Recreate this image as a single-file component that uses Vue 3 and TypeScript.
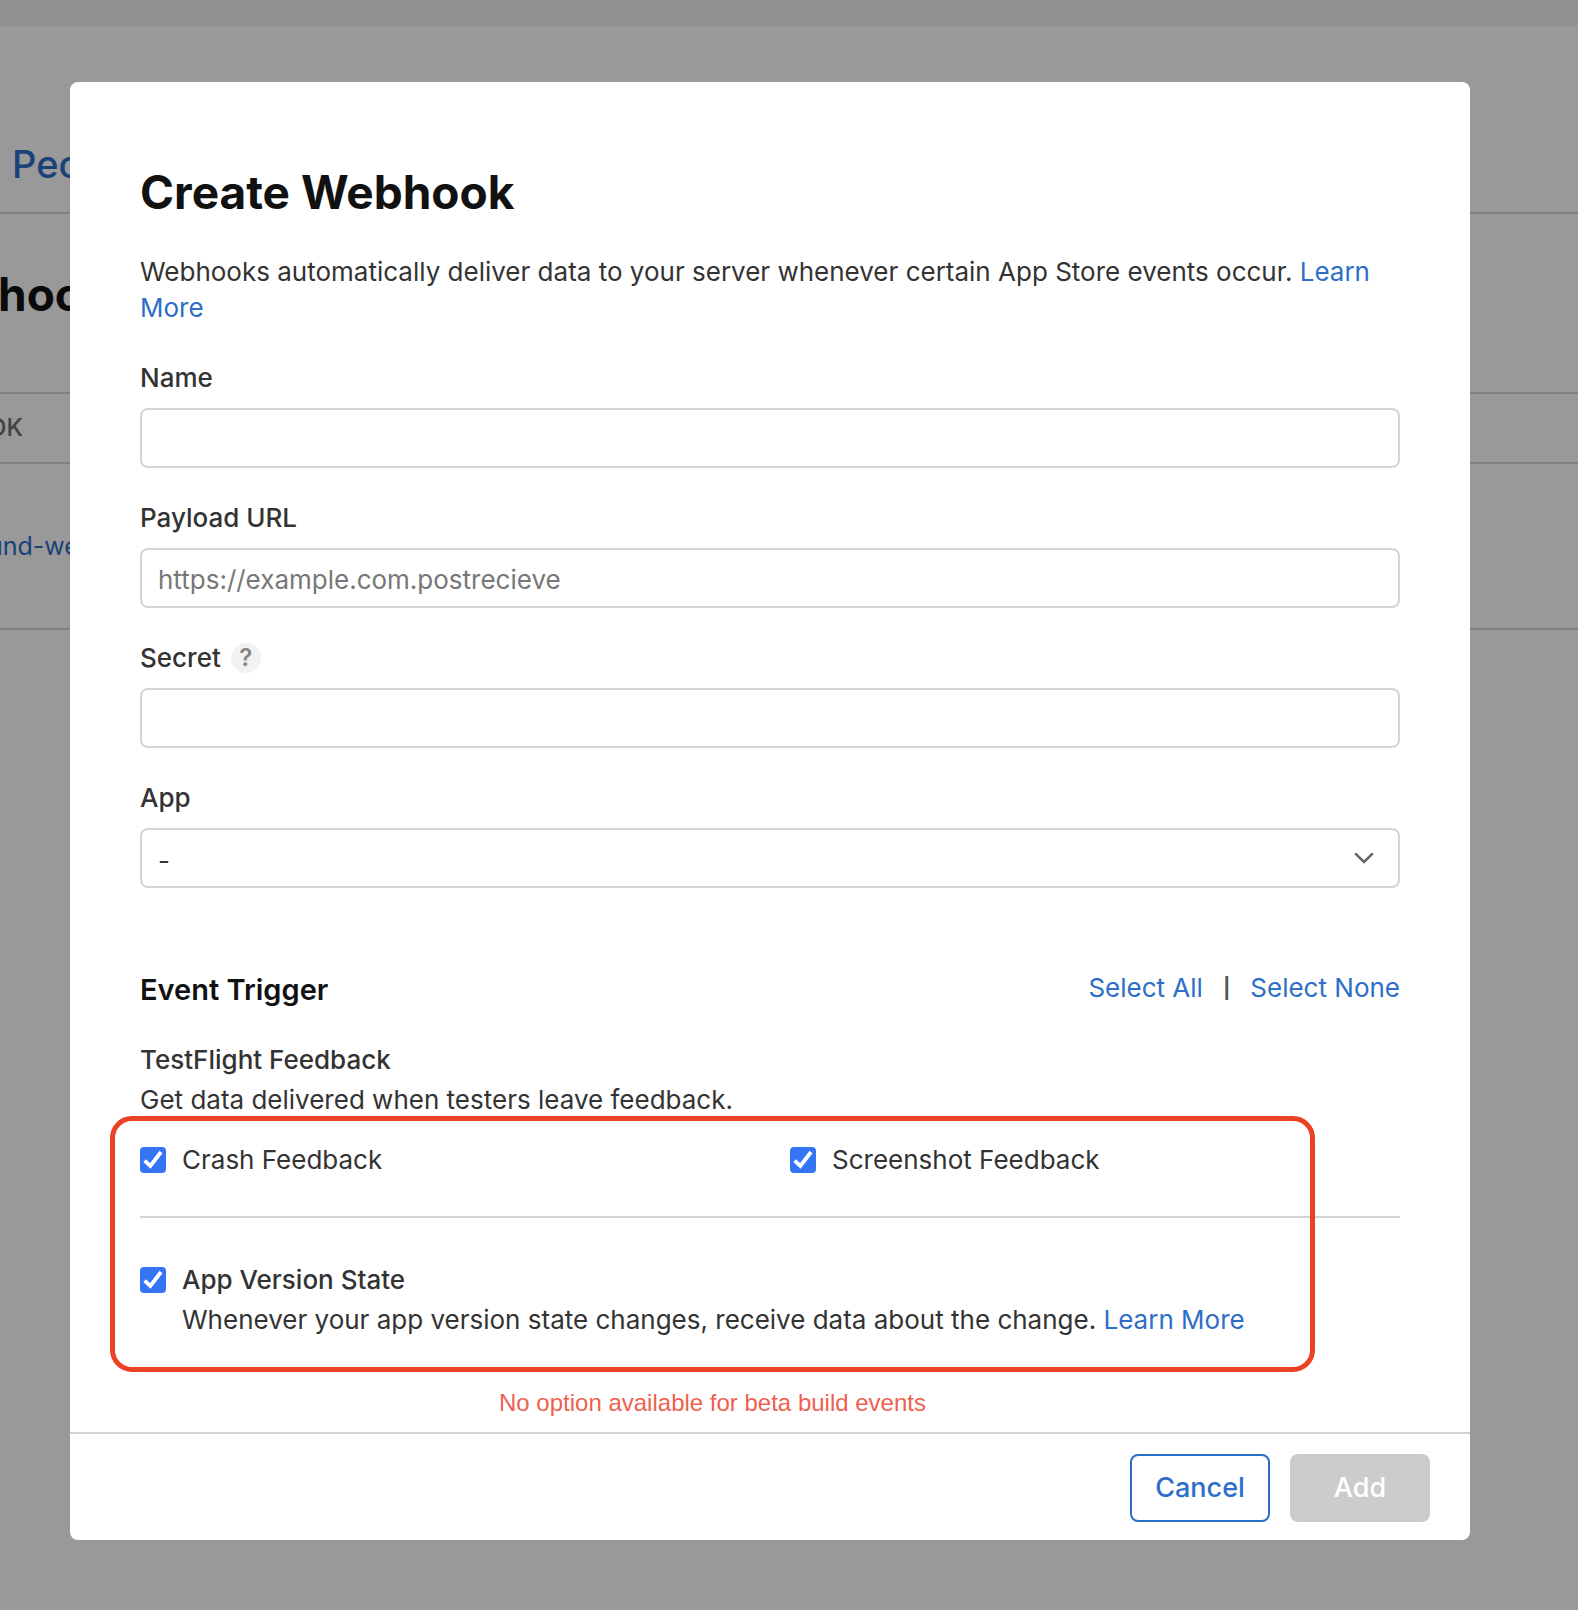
<script setup lang="ts">
import { reactive, ref } from 'vue'

interface EventOption {
  id: string
  label: string
}

const form = reactive({ name: '', payloadUrl: '', secret: '', app: '-' })

const feedbackOptions: EventOption[] = [
  { id: 'crash-feedback', label: 'Crash Feedback' },
  { id: 'screenshot-feedback', label: 'Screenshot Feedback' },
]
const stateOption: EventOption = { id: 'app-version-state', label: 'App Version State' }
const allIds = [...feedbackOptions.map((option) => option.id), stateOption.id]

const selected = ref<string[]>([...allIds])
const selectAll = () => { selected.value = [...allIds] }
const selectNone = () => { selected.value = [] }
</script>

<template>
  <div class="screen">
    <div class="page">
      <div class="page-strip"></div>
      <nav class="page-tabs"><a href="#people">Peo</a></nav>
      <h1 class="page-title">hoo</h1>
      <div class="page-head">OK</div>
      <div class="page-row"><a href="#webhook">und-we</a></div>
    </div>

    <div class="backdrop">
      <form class="modal" role="dialog" aria-labelledby="modal-title" @submit.prevent>
        <div class="body">
          <h2 id="modal-title" class="title">Create Webhook</h2>
          <p class="intro">
            Webhooks automatically deliver data to your server whenever certain App Store events occur.
            <a href="#learn">Learn More</a>
          </p>

          <div class="fields">
            <div class="field">
              <label for="name">Name</label>
              <input id="name" v-model="form.name" class="control" type="text" />
            </div>
            <div class="field">
              <label for="payload">Payload URL</label>
              <input
                id="payload"
                v-model="form.payloadUrl"
                class="control"
                type="text"
                placeholder="https://example.com.postrecieve"
              />
            </div>
            <div class="field">
              <div class="label-row">
                <label for="secret">Secret</label>
                <button type="button" class="help">?</button>
              </div>
              <input id="secret" v-model="form.secret" class="control" type="text" />
            </div>
            <div class="field">
              <label for="app">App</label>
              <div class="select-wrap">
                <select id="app" v-model="form.app" class="control">
                  <option value="-">-</option>
                </select>
                <svg class="chevron" viewBox="0 0 20 12" aria-hidden="true">
                  <path d="M1.2 1.3 L10 10 L18.8 1.3" />
                </svg>
              </div>
            </div>
          </div>

          <div class="section-head">
            <h3>Event Trigger</h3>
            <div class="actions">
              <button type="button" class="link" @click="selectAll">Select All</button>
              <span class="bar">|</span>
              <button type="button" class="link" @click="selectNone">Select None</button>
            </div>
          </div>

          <h4 class="group-title">TestFlight Feedback</h4>
          <p class="line">Get data delivered when testers leave feedback.</p>

          <div class="options">
            <div class="option-grid">
              <label v-for="option in feedbackOptions" :key="option.id" class="option">
                <span class="tick">
                  <input v-model="selected" type="checkbox" :value="option.id" />
                  <svg viewBox="0 0 26 26" aria-hidden="true"><path d="M4.6 13.6 L10.4 19 L21 5" /></svg>
                </span>
                <span>{{ option.label }}</span>
              </label>
            </div>
            <hr />
            <label class="option strong">
              <span class="tick">
                <input v-model="selected" type="checkbox" :value="stateOption.id" />
                <svg viewBox="0 0 26 26" aria-hidden="true"><path d="M4.6 13.6 L10.4 19 L21 5" /></svg>
              </span>
              <span>{{ stateOption.label }}</span>
            </label>
            <p class="line indent">
              Whenever your app version state changes, receive data about the change.
              <a href="#states">Learn More</a>
            </p>
            <div class="highlight"></div>
          </div>
          <p class="note">No option available for beta build events</p>
        </div>

        <footer class="footer">
          <button type="button" class="btn">Cancel</button>
          <button type="submit" class="btn add" disabled>Add</button>
        </footer>
      </form>
    </div>
  </div>
</template>

<style>
body {
  margin: 0;
}
</style>

<style scoped>
.screen {
  display: grid;
  min-height: 100vh;
  font-family: Inter, "Liberation Sans", sans-serif;
  font-size: 26px;
  line-height: 36px;
  color: #333;
}
.screen * {
  box-sizing: border-box;
}
h1, h2, h3, h4, p {
  margin: 0;
}
a {
  color: #2d6ec8;
  text-decoration: none;
}
button, input, select {
  font: inherit;
  color: inherit;
  margin: 0;
}

/* Page behind the dialog */
.page, .backdrop {
  grid-area: 1 / 1;
  min-width: 0;
}
.page {
  overflow: hidden;
  background: #fff;
}
.page-strip {
  height: 26px;
  background: #f0f0f0;
}
.page-tabs {
  height: 188px;
  padding: 114px 0 0 12px;
  border-bottom: 2px solid #d6d6d6;
  font-size: 38px;
  font-weight: 500;
  line-height: 48px;
}
.page-title {
  height: 180px;
  padding: 52px 0 0;
  border-bottom: 2px solid #d6d6d6;
  margin-left: -2px;
  font-size: 46px;
  line-height: 56px;
  color: #111;
}
.page-head {
  height: 70px;
  padding: 16px 0;
  border-bottom: 2px solid #d6d6d6;
  margin-left: -12px;
  font-size: 24px;
  font-weight: 500;
  color: #6e6e6e;
}
.page-row {
  height: 166px;
  padding: 64px 0;
  border-bottom: 2px solid #d6d6d6;
  margin-left: -12px;
  font-size: 25px;
}

.backdrop {
  position: relative;
  padding: 82px 108px 70px 70px;
  background: rgba(0, 0, 0, 0.4);
}
.modal {
  background: #fff;
  border-radius: 8px;
}
.body {
  padding: 82px 70px 15px;
}
.title {
  font-size: 46px;
  font-weight: 700;
  line-height: 56px;
  color: #111;
}
.intro {
  margin-top: 34px;
}

.fields {
  display: flex;
  flex-direction: column;
  gap: 32px;
  margin-top: 34px;
}
.field {
  display: flex;
  flex-direction: column;
  gap: 12px;
  font-weight: 500;
}
.label-row {
  display: flex;
  align-items: center;
  gap: 10px;
}
.help {
  width: 30px;
  height: 30px;
  padding: 0;
  border: 0;
  border-radius: 50%;
  background: #f2f2f2;
  color: #888;
  font-size: 24px;
  font-weight: 600;
  line-height: 30px;
}
.control {
  display: block;
  width: 100%;
  height: 60px;
  padding: 2px 16px 0;
  border: 2px solid #d4d4d4;
  border-radius: 8px;
  background: #fff;
  font-weight: 400;
  appearance: none;
}
.control::placeholder {
  color: #777;
  opacity: 1;
}
.select-wrap {
  position: relative;
}
.select-wrap .control {
  padding-top: 6px;
}
.chevron {
  position: absolute;
  top: 24px;
  right: 26px;
  width: 20px;
  height: 12px;
  pointer-events: none;
}
.chevron path {
  fill: none;
  stroke: #666;
  stroke-width: 2.6;
}

.section-head {
  display: flex;
  justify-content: space-between;
  align-items: flex-start;
  margin-top: 82px;
}
.section-head h3 {
  font-size: 29px;
  font-weight: 600;
  line-height: 40px;
  color: #111;
}
.actions {
  display: flex;
  gap: 20px;
}
.bar {
  font-size: 20px;
  font-weight: 700;
  color: #555;
}
.link {
  padding: 0;
  border: 0;
  background: none;
  color: #2d6ec8;
}
.group-title {
  margin-top: 30px;
  font-size: 26px;
  font-weight: 500;
  line-height: 40px;
}
.line {
  line-height: 40px;
}

.options {
  position: relative;
  margin-top: 22px;
}
.option-grid {
  display: grid;
  grid-template-columns: 1fr 1fr;
  gap: 40px;
}
.option {
  display: flex;
  align-items: center;
  gap: 16px;
}
.strong {
  font-weight: 500;
  line-height: 40px;
}
.indent {
  padding-left: 42px;
}
.tick {
  display: grid;
  width: 26px;
  height: 26px;
}
.tick input {
  grid-area: 1 / 1;
  width: 26px;
  height: 26px;
  border: 2px solid #b0b0b0;
  border-radius: 4px;
  appearance: none;
}
.tick input:checked {
  border-color: #3475f6;
  background: #3475f6;
}
.tick svg {
  grid-area: 1 / 1;
  visibility: hidden;
  pointer-events: none;
}
.tick input:checked + svg {
  visibility: visible;
}
.tick path {
  fill: none;
  stroke: #fff;
  stroke-width: 3.8;
}
hr {
  height: 2px;
  margin: 38px 0 42px;
  border: 0;
  background: #d4d4d4;
}
.highlight {
  position: absolute;
  inset: -26px 85px -32px -30px;
  border: 5px solid #eb4126;
  border-radius: 22px;
  pointer-events: none;
}
.note {
  margin: 49px 85px 0 -30px;
  font-family: "Liberation Sans", sans-serif;
  font-size: 24px;
  line-height: 28px;
  text-align: center;
  color: #ee5f50;
}

.footer {
  display: flex;
  justify-content: flex-end;
  gap: 20px;
  padding: 20px 40px 18px;
  border-top: 2px solid #d4d4d4;
}
.btn {
  width: 140px;
  height: 68px;
  padding: 0;
  border: 2px solid #2d6ec8;
  border-radius: 8px;
  background: #fff;
  color: #2d6ec8;
  font-size: 27px;
  font-weight: 500;
}
.add {
  border-color: #ccc;
  background: #ccc;
  color: #fff;
}
</style>
